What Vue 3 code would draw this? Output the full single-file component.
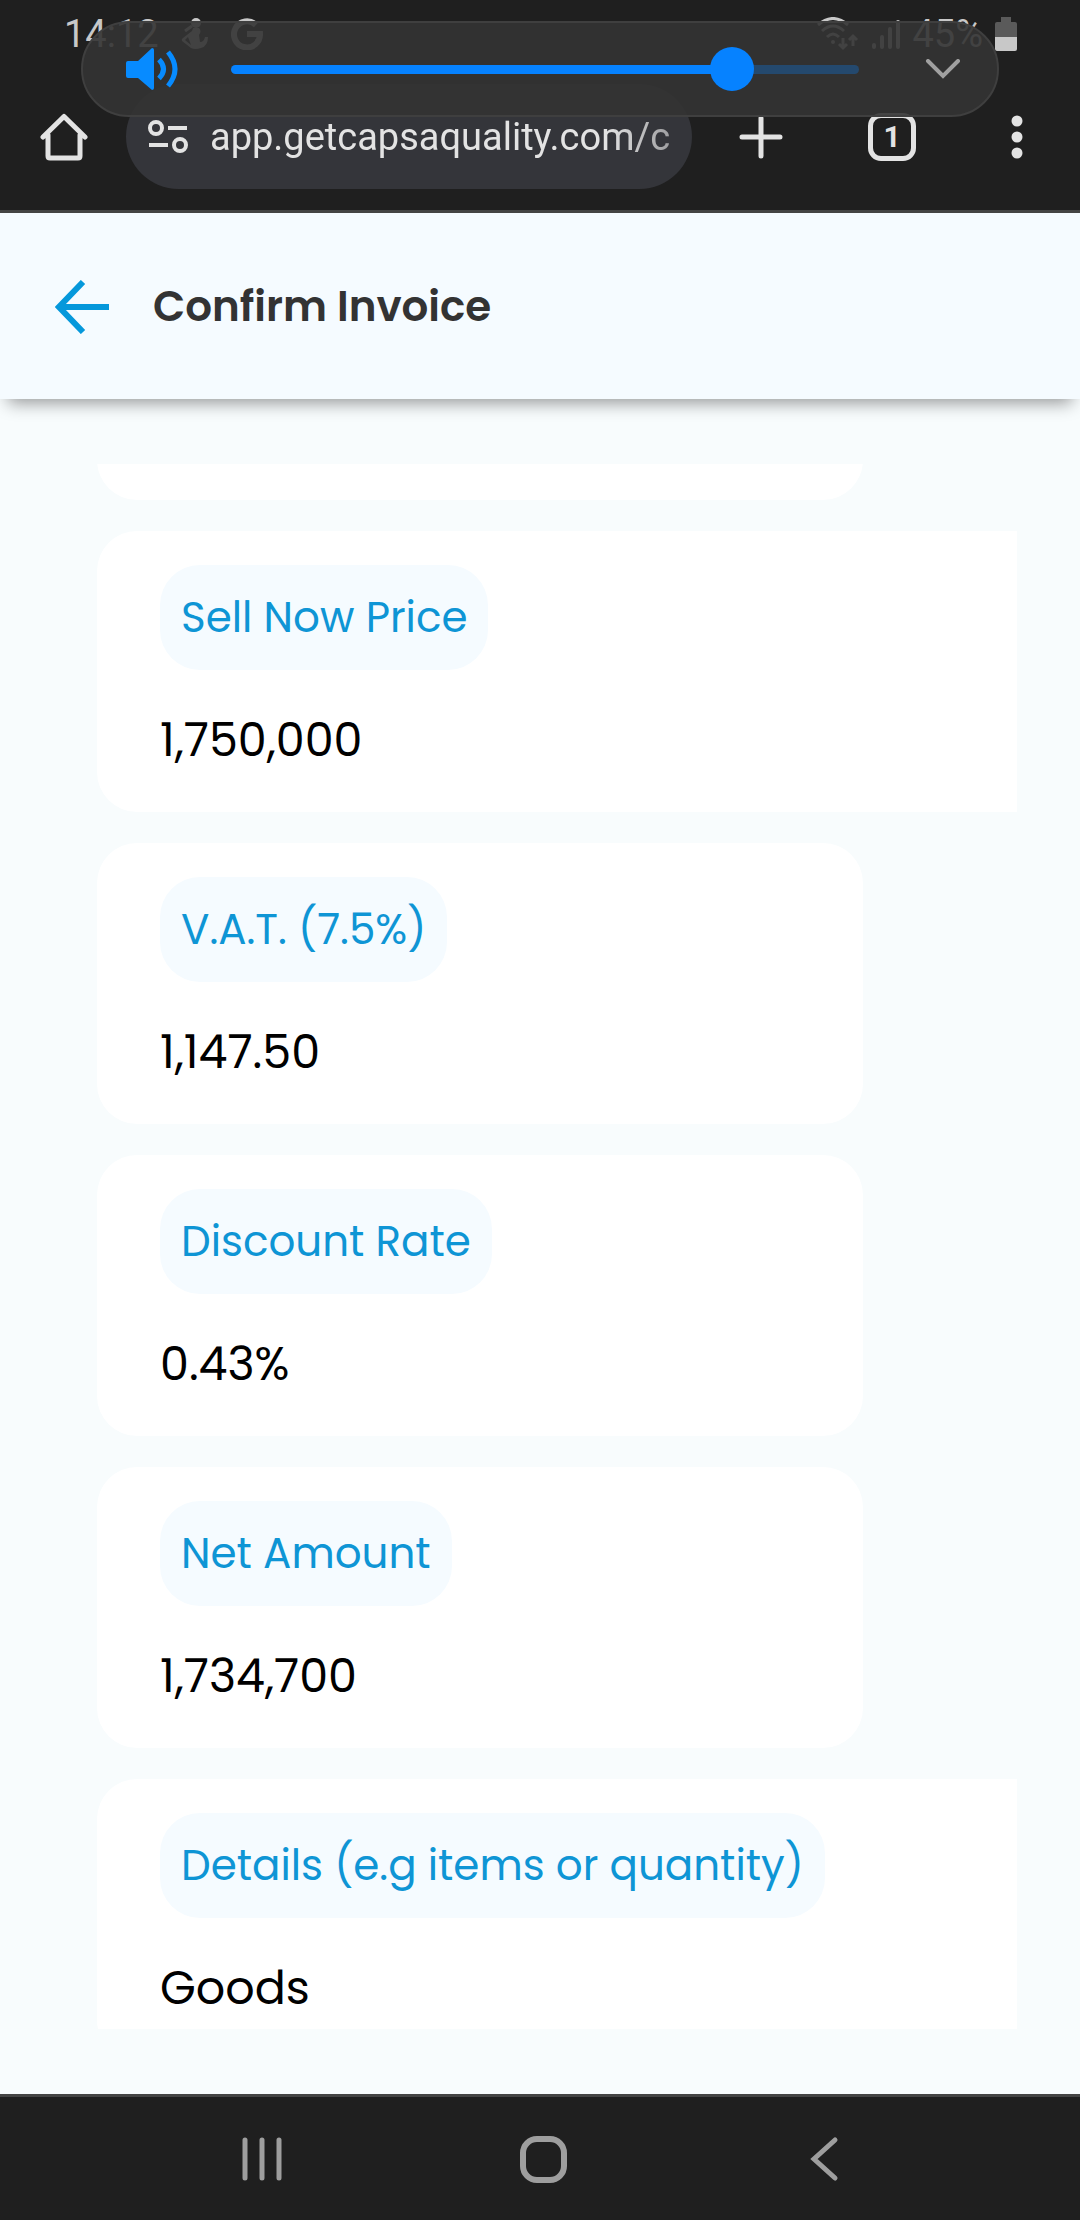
<script setup>
import { ref, computed } from 'vue'

const volume = ref(82)
const trackFill = computed(() => ({ '--fill': `${volume.value - 2}%` }))
const address = ref('app.getcapsaquality.com/c')

const fields = [
  { label: 'Sell Now Price', value: '1,750,000', wide: true },
  { label: 'V.A.T. (7.5%)', value: '1,147.50' },
  { label: 'Discount Rate', value: '0.43%' },
  { label: 'Net Amount', value: '1,734,700' },
  { label: 'Details (e.g items or quantity)', value: 'Goods', wide: true },
]
</script>

<template>
  <div class="screen">
    <header class="chrome">
      <div class="status">
        <div class="status-group">
          <span class="clock">14:12</span>
          <svg class="person" width="28" height="32" viewBox="0 0 28 32" fill="currentColor">
            <circle cx="15" cy="5" r="5" />
            <path d="M12 10 18 10Q21 13 18 17L19 24Q23 24 24 19L27 19Q27 28 20 30Q14 32 10 30L1 23Q0 21 2 20L11 13ZM7 19 4 22 10 27Z" fill-rule="evenodd" />
            <path d="M4 13 11 8" stroke="currentColor" stroke-width="3" />
          </svg>
          <svg width="32" height="32" viewBox="0 0 32 32" fill="none" stroke="currentColor" stroke-width="6">
            <path d="M25 7A13 13 0 1 0 29 16H16" />
          </svg>
        </div>
        <div class="status-group right">
          <svg width="44" height="34" viewBox="0 0 44 34" fill="none" stroke="currentColor" stroke-width="3">
            <path d="M2 8Q17-5 32 8M6 14Q17 4 28 14M11 20Q17 14 23 20" />
            <circle cx="17" cy="25" r="2" fill="currentColor" stroke="none" />
            <path d="M27 21V31M23 27 27 31 31 27M37 29V19M33 23 37 19 41 23" />
          </svg>
          <svg width="28" height="34" viewBox="0 0 28 34" stroke="currentColor" stroke-width="4" stroke-linecap="round">
            <path d="M2 28V30M10 20V30M18 12V30M26 5V30" />
          </svg>
          <span class="clock">45%</span>
          <svg width="22" height="34" viewBox="0 0 22 34">
            <path d="M6 0H16V5H20Q22 5 22 7V20H0V7Q0 5 2 5H6Z" fill="#5a5a5a" />
            <path d="M0 20H22V32Q22 34 20 34H2Q0 34 0 32Z" fill="currentColor" />
          </svg>
        </div>
      </div>

      <div class="toolbar">
        <button class="tool" aria-label="Home">
          <svg width="48" height="48" viewBox="0 0 48 48" fill="none" stroke="currentColor" stroke-width="5" stroke-linecap="round" stroke-linejoin="round">
            <path d="M8 22V43Q8 45 10 45H38Q40 45 40 43V22M3 24 24 3.500 45 24" />
          </svg>
        </button>
        <div class="address">
          <svg width="40" height="34" viewBox="0 0 40 34" fill="none" stroke="currentColor" stroke-width="4">
            <circle cx="8" cy="8" r="6" />
            <circle cx="32" cy="25" r="6" />
            <path d="M20 8H39M1 25H20" />
          </svg>
          <input v-model="address" class="url" type="text" aria-label="Address" />
        </div>
        <div class="actions">
          <button class="tool" aria-label="New tab">
            <svg width="48" height="48" viewBox="0 0 48 48" stroke="currentColor" stroke-width="5" stroke-linecap="round">
              <path d="M24 5V43M5 24H43" />
            </svg>
          </button>
          <button class="tool tabs" aria-label="Open tabs">1</button>
          <button class="tool more" aria-label="Menu">
            <svg width="12" height="48" viewBox="0 0 12 48" fill="currentColor">
              <circle cx="6" cy="8" r="5.500" /><circle cx="6" cy="24" r="5.500" /><circle cx="6" cy="40" r="5.500" />
            </svg>
          </button>
        </div>
      </div>

      <div class="volume">
        <svg width="52" height="42" viewBox="0 0 52 42">
          <path d="M2 13H12L26 0Q28 0 28 2V40Q28 42 26 42L12 30H2Q0 30 0 28V15Q0 13 2 13Z" fill="#078bff" />
          <path d="M33 11.500Q42 21 33 30.500M42 4Q56 21 42 38" fill="none" stroke="#078bff" stroke-width="5" />
        </svg>
        <input v-model.number="volume" class="slider" :style="trackFill" type="range" min="0" max="100" aria-label="Media volume" />
        <button class="expand" aria-label="Show more volume controls">
          <svg width="36" height="20" viewBox="0 0 36 20" fill="none" stroke="currentColor" stroke-width="4" stroke-linecap="round">
            <path d="M3 2 18 17 33 2" />
          </svg>
        </button>
      </div>
    </header>

    <div class="titlebar">
      <button class="back" aria-label="Back">
        <svg width="54" height="54" viewBox="0 0 54 54" fill="none" stroke="currentColor" stroke-width="6">
          <path d="M28 2 4 27 28 52M4 27H54" />
        </svg>
      </button>
      <h1>Confirm Invoice</h1>
    </div>

    <main class="content">
      <div class="viewport">
        <dl class="list">
          <div class="card"></div>
          <div v-for="f in fields" :key="f.label" class="card" :class="{ wide: f.wide }">
            <dt>{{ f.label }}</dt>
            <dd>{{ f.value }}</dd>
          </div>
        </dl>
      </div>
    </main>

    <nav class="system">
      <button aria-label="Recent apps">
        <svg width="48" height="48" viewBox="0 0 48 48" stroke="currentColor" stroke-width="5" stroke-linecap="round">
          <path d="M7 5V43M24 5V43M41 5V43" />
        </svg>
      </button>
      <button aria-label="Home screen">
        <svg width="48" height="48" viewBox="0 0 48 48" fill="none" stroke="currentColor" stroke-width="6">
          <rect x="4" y="4" width="41" height="41" rx="14" />
        </svg>
      </button>
      <button aria-label="Go back">
        <svg width="48" height="48" viewBox="0 0 48 48" fill="none" stroke="currentColor" stroke-width="5" stroke-linecap="round">
          <path d="M35 5 14 24 35 43" />
        </svg>
      </button>
    </nav>
  </div>
</template>

<style>
body {
  margin: 0;
  background: #f8fcfd;
}
</style>

<style scoped>
.screen {
  display: flex;
  flex-direction: column;
  height: 100vh;
  background: #f8fcfd;
  font-family: Poppins, Inter, sans-serif;
}
svg {
  display: block;
  flex: none;
}
button {
  display: flex;
  align-items: center;
  justify-content: center;
  padding: 0;
  border: 0;
  background: none;
  color: inherit;
}

.chrome {
  position: relative;
  flex: none;
  background: #1f1f1f;
  border-bottom: 3px solid #444;
  font-family: Roboto, sans-serif;
}
.status {
  display: flex;
  justify-content: space-between;
  align-items: center;
  height: 68px;
  padding: 0 63px 0 64px;
  color: #c8c8c8;
}
.status-group {
  display: flex;
  align-items: center;
  gap: 22px;
}
.status-group.right {
  gap: 12px;
}
.clock {
  font-size: 38px;
  line-height: 48px;
}
.toolbar {
  display: flex;
  align-items: center;
  padding: 16px 45px 21px 40px;
  color: #e3e3e3;
}
.tool {
  width: 48px;
  height: 48px;
}
.address {
  display: flex;
  flex: 1;
  align-items: center;
  gap: 22px;
  min-width: 0;
  height: 105px;
  margin: 0 45px 0 38px;
  padding: 0 20px 0 22px;
  box-sizing: border-box;
  border-radius: 53px;
  background: #34353a;
}
.url {
  flex: 1;
  min-width: 0;
  padding: 0;
  border: 0;
  background: none;
  color: inherit;
  font: 38px/48px Roboto, sans-serif;
  mask-image: linear-gradient(to right, #000 86%, rgba(0, 0, 0, 0.6));
}
.actions {
  display: flex;
  gap: 83px;
}
.tabs {
  box-sizing: border-box;
  border: 5px solid #e3e3e3;
  border-radius: 13px;
  font: bold 30px/36px Roboto, sans-serif;
}
.more {
  width: 36px;
}
.volume {
  position: absolute;
  top: 21px;
  left: 81px;
  right: 81px;
  display: flex;
  align-items: center;
  height: 96px;
  padding: 0 36px 0 43px;
  box-sizing: border-box;
  border: 2px solid #3f3f3f;
  border-radius: 48px;
  background: rgba(51, 51, 51, 0.9);
}
.slider {
  flex: 1;
  min-width: 0;
  height: 46px;
  margin: 0 66px 0 53px;
  appearance: none;
  background: none;
}
.slider::-webkit-slider-runnable-track {
  height: 9px;
  border-radius: 5px;
  background: linear-gradient(to right, #0682ff var(--fill), #24496e var(--fill));
}
.slider::-webkit-slider-thumb {
  width: 44px;
  height: 44px;
  margin-top: -18px;
  appearance: none;
  border-radius: 50%;
  background: #0682ff;
}
.expand {
  color: #a0a0a0;
}

.titlebar {
  position: relative;
  display: flex;
  flex: none;
  align-items: center;
  gap: 44px;
  height: 186px;
  padding: 2px 54px 0 55px;
  box-sizing: border-box;
  background: #f5fbff;
  box-shadow: 0 12px 16px -8px rgba(0, 0, 0, 0.4);
}
.back {
  color: #0598db;
}
h1 {
  margin: 0;
  color: #333;
  font-size: 42px;
  line-height: 64px;
  font-weight: 600;
}

.content {
  display: flex;
  flex: 1;
  min-height: 0;
  padding: 65px 63px 65px 97px;
}
.viewport {
  flex: 1;
  overflow: hidden;
}
.list {
  display: flex;
  flex-direction: column;
  gap: 31px;
  margin: -245px 0 0;
}
.card {
  display: flex;
  flex-direction: column;
  align-items: flex-start;
  gap: 36px;
  width: calc(100% - 154px);
  height: 281px;
  padding: 34px 63px;
  box-sizing: border-box;
  border-radius: 40px;
  background: #fff;
}
.card.wide {
  width: 100%;
  border-radius: 40px 0 0 40px;
}
dt {
  padding: 0 21px;
  border-radius: 40px;
  background: #f5fbff;
  color: #0e95d5;
  font-size: 42px;
  line-height: 105px;
  white-space: nowrap;
}
dd {
  margin: 0;
  color: #000;
  font-size: 46px;
  line-height: 68px;
}

.system {
  display: grid;
  flex: none;
  grid-template-columns: repeat(3, 1fr);
  height: 126px;
  padding: 0 116px 0 121px;
  box-sizing: border-box;
  border-top: 3px solid #444;
  background: #1f1f1f;
  color: #9e9e9e;
}
</style>
